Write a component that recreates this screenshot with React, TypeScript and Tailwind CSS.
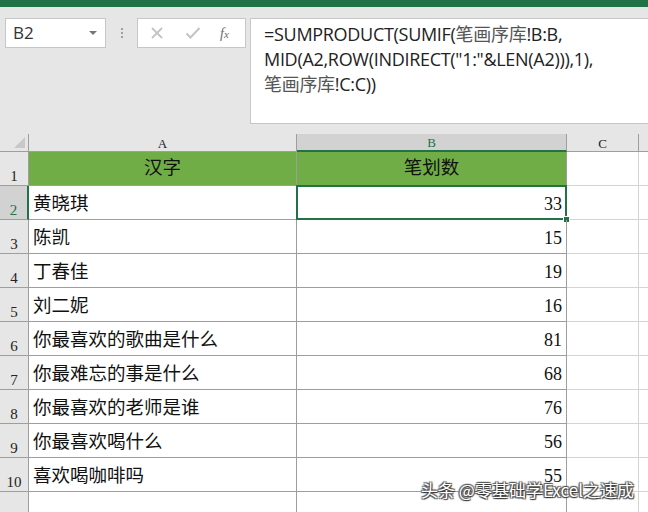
import React from 'react';

const rows: [string, number][] = [
  ['黄晓琪', 33],
  ['陈凯', 15],
  ['丁春佳', 19],
  ['刘二妮', 16],
  ['你最喜欢的歌曲是什么', 81],
  ['你最难忘的事是什么', 68],
  ['你最喜欢的老师是谁', 76],
  ['你最喜欢喝什么', 56],
  ['喜欢喝咖啡吗', 55],
];

const cellFont = { fontFamily: '"Liberation Serif", "Noto Sans CJK SC", serif' };

function RowHead({ n, active }: { n?: number; active?: boolean }) {
  return (
    <div
      className={`h-[34px] flex items-end justify-center pb-[1px] text-[15px] leading-none border-b border-r border-[#9e9e9e] ${
        active ? 'bg-[#d2d2d2] text-[#217346] border-r-2 border-r-[#217346]' : 'bg-[#e6e6e6] text-[#222]'
      }`}
      style={cellFont}
    >
      {n}
    </div>
  );
}

export default function App() {
  return (
    <div className="relative w-[648px] h-[512px] overflow-hidden bg-[#e6e6e6]">
      {/* title bar strip */}
      <div className="h-[7px] bg-[#217346]" />

      {/* formula bar */}
      <div className="flex items-start pt-[11px] h-[127px]">
        <div className="ml-[5px] w-[101px] h-[30px] bg-white border border-[#c6c6c6] flex items-center justify-between pl-[7px] pr-[8px]">
          <span className="text-[17px] text-[#333]" style={{ fontFamily: '"Open Sans", "Liberation Sans", sans-serif' }}>B2</span>
          <span className="w-0 h-0 border-l-[4px] border-r-[4px] border-t-[4px] border-l-transparent border-r-transparent border-t-[#777]" />
        </div>
        <div className="w-[31px] h-[30px] flex flex-col items-center justify-center gap-[2px]">
          <span className="w-[2px] h-[2px] bg-[#a0a0a0]" />
          <span className="w-[2px] h-[2px] bg-[#a0a0a0]" />
          <span className="w-[2px] h-[2px] bg-[#a0a0a0]" />
        </div>
        <div className="w-[109px] h-[30px] bg-white border border-[#c6c6c6] flex items-center">
          <svg width="14" height="14" viewBox="0 0 14 14" className="ml-[12px]">
            <path d="M2 2 L12 12 M12 2 L2 12" stroke="#c4c4c4" strokeWidth="1.8" />
          </svg>
          <svg width="16" height="14" viewBox="0 0 16 14" className="ml-[21px]">
            <path d="M1.5 7.5 L5.5 11.5 L14.5 2" stroke="#c4c4c4" strokeWidth="2" fill="none" />
          </svg>
          <span
            className="ml-[19px] text-[14px] italic text-[#6a6a6a]"
            style={{ fontFamily: '"Liberation Serif", serif' }}
          >
            f<span className="text-[11px]">x</span>
          </span>
        </div>
        <div
          className="ml-[4px] flex-1 h-[106px] bg-white border border-[#c6c6c6] border-r-0 pl-[13px] pt-[3px] text-[18px] leading-[25px] text-[#222]"
          style={{ fontFamily: '"Open Sans", "Liberation Sans", "Noto Sans CJK SC", sans-serif', letterSpacing: '-0.3px' }}
        >
          <div>=SUMPRODUCT(SUMIF(<span className="text-[#555]">笔画序库</span>!B:B,</div>
          <div>MID(A2,ROW(INDIRECT("1:"&amp;LEN(A2))),1),</div>
          <div><span className="text-[#555]">笔画序库</span>!C:C))</div>
        </div>
      </div>

      {/* grid */}
      <div className="grid grid-cols-[29px_268px_270px_72px_1fr] bg-white">
        {/* column headers */}
        <div className="h-[18px] bg-[#e6e6e6] border-b border-r border-[#9e9e9e] flex items-end justify-end pr-[3px] pb-[3px]">
          <span className="w-0 h-0 border-b-[11px] border-l-[11px] border-b-[#c8c8c8] border-l-transparent" />
        </div>
        <div className="h-[18px] bg-[#e6e6e6] border-b border-r border-[#9e9e9e] flex items-end justify-center text-[13px] leading-none pb-[1px] text-[#222]" style={cellFont}>A</div>
        <div className="h-[18px] bg-[#d2d2d2] border-b-2 border-b-[#217346] border-r border-[#9e9e9e] flex items-end justify-center text-[13px] leading-none pb-[1px] text-[#217346]" style={cellFont}>B</div>
        <div className="h-[18px] bg-[#e6e6e6] border-b border-r border-[#9e9e9e] flex items-end justify-center text-[13px] leading-none pb-[1px] text-[#222]" style={cellFont}>C</div>
        <div className="h-[18px] bg-[#e6e6e6] border-b border-[#9e9e9e]" />

        {/* row 1 */}
        <RowHead n={1} />
        <div className="h-[34px] bg-[#70ad47] border-b border-r border-[#9e9e9e] flex items-center justify-center text-[18.5px] text-[#111]" style={cellFont}>汉字</div>
        <div className="h-[34px] bg-[#70ad47] border-b border-r border-[#9e9e9e] flex items-center justify-center text-[18.5px] text-[#111]" style={cellFont}>笔划数</div>
        <div className="h-[34px] border-b border-r border-[#d4d4d4]" />
        <div className="h-[34px] border-b border-[#d4d4d4]" />

        {rows.map(([name, n], i) => (
          <React.Fragment key={i}>
            <RowHead n={i + 2} active={i === 0} />
            <div className="h-[34px] border-b border-r border-[#9e9e9e] flex items-end pb-[3px] pl-[4px] text-[18.5px] leading-[24px] text-[#111]" style={cellFont}>
              {name}
            </div>
            <div className="relative h-[34px] border-b border-r border-[#9e9e9e] flex items-end justify-end pb-[3px] pr-[4px] text-[18px] leading-[24px] text-[#111]" style={cellFont}>
              {n}
              {i === 0 && (
                <>
                  <div className="absolute -left-[1px] -top-[1px] -right-[1px] -bottom-[1px] border-2 border-[#217346]" />
                  <div className="absolute -right-[4px] -bottom-[4px] w-[7px] h-[7px] bg-[#217346] border border-white" />
                </>
              )}
            </div>
            <div className="h-[34px] border-b border-r border-[#d4d4d4]" />
            <div className="h-[34px] border-b border-[#d4d4d4]" />
          </React.Fragment>
        ))}

        {/* row 11, label below the window edge */}
        <RowHead />
        <div className="h-[34px] border-r border-[#9e9e9e]" />
        <div className="h-[34px] border-r border-[#9e9e9e]" />
        <div className="h-[34px] border-r border-[#d4d4d4]" />
        <div className="h-[34px]" />
      </div>

      {/* watermark */}
      <div
        className="absolute left-[421px] top-[477px] text-[17px] text-white whitespace-nowrap"
        style={{
          fontFamily: '"Noto Sans CJK SC", sans-serif',
          textShadow: '1px 1px 1px #333, -1px -1px 1px #555, 1px -1px 1px #555, -1px 1px 1px #555',
        }}
      >
        头条 @零基础学Excel之速成
      </div>
    </div>
  );
}
